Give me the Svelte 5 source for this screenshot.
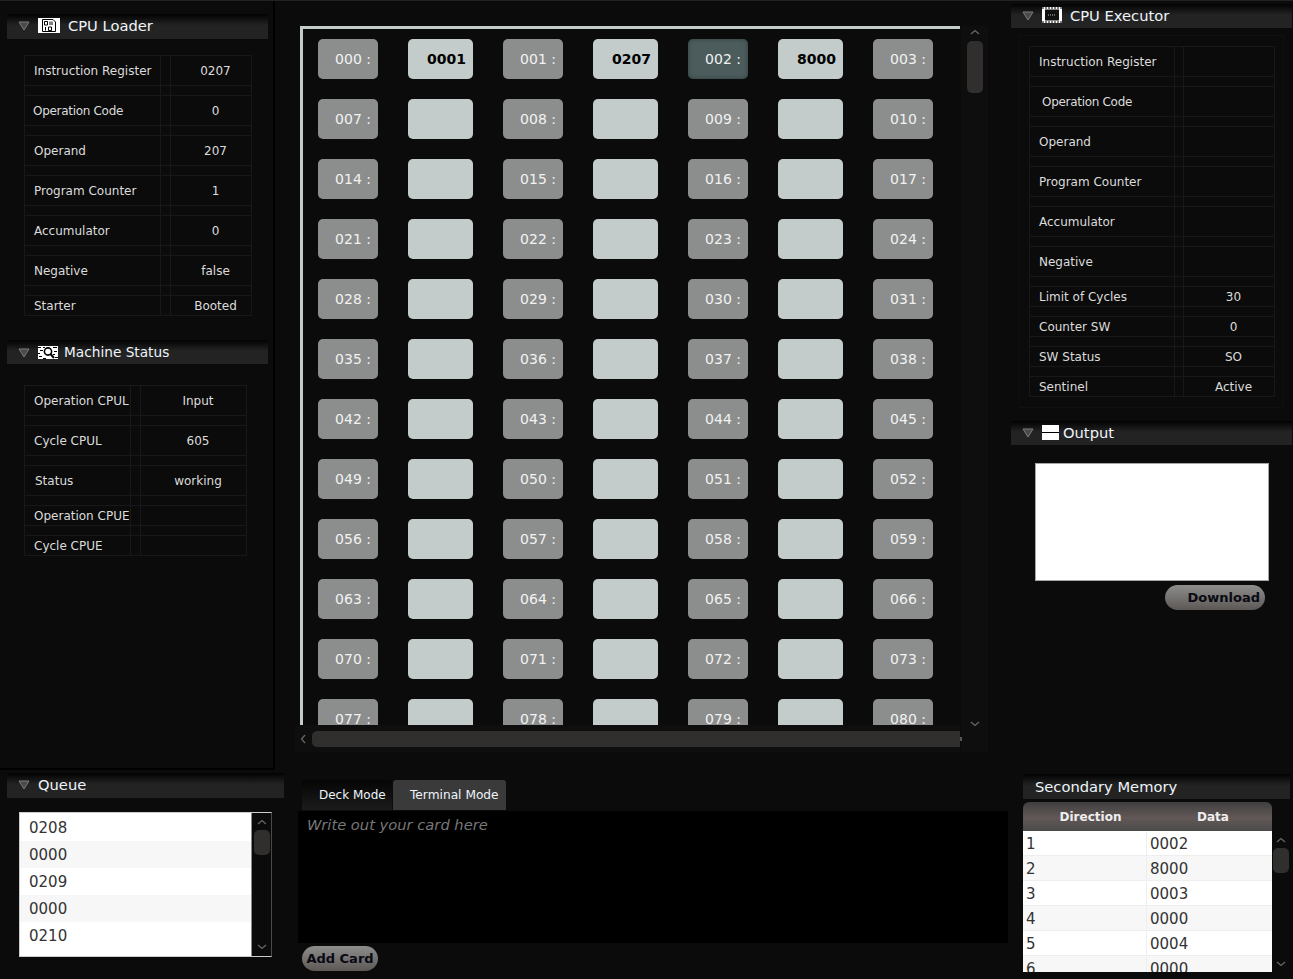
<script>
	const loaderRows = [
		{ label: 'Instruction Register', value: '0207' },
		{ label: 'Operation Code', value: '0', nudge: true },
		{ label: 'Operand', value: '207' },
		{ label: 'Program Counter', value: '1' },
		{ label: 'Accumulator', value: '0' },
		{ label: 'Negative', value: 'false' },
		{ label: 'Starter', value: 'Booted', short: true }
	];
	const statusRows = [
		{ label: 'Operation CPUL', value: 'Input' },
		{ label: 'Cycle CPUL', value: '605' },
		{ label: 'Status', value: 'working', indent: true },
		{ label: 'Operation CPUE', value: '', short: true },
		{ label: 'Cycle CPUE', value: '', short: true }
	];
	const executorRows = [
		{ label: 'Instruction Register', value: '' },
		{ label: 'Operation Code', value: '', wide: true },
		{ label: 'Operand', value: '' },
		{ label: 'Program Counter', value: '' },
		{ label: 'Accumulator', value: '' },
		{ label: 'Negative', value: '' },
		{ label: 'Limit of Cycles', value: '30', short: true },
		{ label: 'Counter SW', value: '0', short: true },
		{ label: 'SW Status', value: 'SO', short: true },
		{ label: 'Sentinel', value: 'Active', short: true }
	];

	const values = { 0: '0001', 1: '0207', 2: '8000' };
	const deckRows = Array.from({ length: 12 }, (_, r) =>
		[0, 1, 2, 3].map((c) => ({ addr: 7 * r + c, value: r === 0 ? values[c] : '' }))
	);
	const pad = (n) => String(n).padStart(3, '0');

	const queue = ['0208', '0000', '0209', '0000', '0210'];
	const memory = [
		[1, '0002'],
		[2, '8000'],
		[3, '0003'],
		[4, '0000'],
		[5, '0004'],
		[6, '0000']
	];
</script>

{#snippet arrow()}
	<svg class="arrow" width="12" height="10" viewBox="0 0 12 10">
		<polygon points="1,1 11,1 6,9" fill="#4a4a4a" stroke="#7c7c7c" />
	</svg>
{/snippet}

{#snippet chevron(dir)}
	<svg class="chev" width="10" height="6" viewBox="0 0 10 6">
		{#if dir === 'up'}
			<path d="M1 5 L5 1.5 L9 5" fill="none" stroke="#666" stroke-width="1.3" />
		{:else}
			<path d="M1 1 L5 4.5 L9 1" fill="none" stroke="#666" stroke-width="1.3" />
		{/if}
	</svg>
{/snippet}

{#snippet grid(rows, kind)}
	<div class="tbl {kind}">
		{#each rows as row, i}
			{#if i > 0}
				<div class="tr gap"><span></span><span></span><span></span></div>
			{/if}
			<div class="tr" class:short={row.short}>
				<span class="lbl" class:nudge={row.nudge} class:indent={row.indent} class:wide={row.wide}>{row.label}</span>
				<span></span>
				<span class="val">{row.value}</span>
			</div>
		{/each}
	</div>
{/snippet}

<div class="page">
	<div class="top">
		<section class="left">
			<header class="title">
				{@render arrow()}
				<svg class="icon" width="22" height="15" viewBox="0 0 22 15">
					<rect width="22" height="15" fill="#fff" />
					<path d="M4.5 1.5 H15 L17.5 4 V13.5 H4.5 Z" fill="none" stroke="#000" />
					<path d="M6.5 3.5 h3 v3.5 h-3 z M12 3.5 v3.5 M14 3.5 v3.5 M7.5 9 v3.5 M10.5 9 h3 v3.5 h-3 z" fill="none" stroke="#000" />
				</svg>
				<span>CPU Loader</span>
			</header>
			{@render grid(loaderRows, 'loader')}

			<header class="title second">
				{@render arrow()}
				<svg class="icon" width="20" height="13" viewBox="0 0 20 13">
					<rect width="20" height="13" fill="#fff" />
					<path d="M0 1.5 h3 M5 1.5 h2 M2 4.5 h3 M0 7.5 h2 M1 10.5 h3 M5 12.5 h3 M15 1.5 h4 M16 5.5 h3 M15 8.5 h2 M17 11.5 h3" stroke="#000" />
					<circle cx="10" cy="5.5" r="3.6" fill="none" stroke="#000" stroke-width="1.6" />
					<path d="M12.5 8 L16 12" stroke="#000" stroke-width="2" />
				</svg>
				<span class="tight status-title">Machine Status</span>
			</header>
			{@render grid(statusRows, 'status')}
		</section>

		<section class="center">
			<div class="deck">
				<div class="viewport">
					<div class="cards">
						{#each deckRows as row}
							{#each row as cell, c}
								<div class="addr" class:active={cell.addr === 2}>{pad(cell.addr)} :</div>
								{#if c < 3}
									<div class="word">{cell.value}</div>
								{/if}
							{/each}
						{/each}
					</div>
				</div>
				<div class="vbar">
					{@render chevron('up')}
					<div class="vthumb"></div>
					<div class="fill"></div>
					{@render chevron('down')}
				</div>
				<div class="hbar">
					<svg width="6" height="10" viewBox="0 0 6 10">
						<path d="M5 1 L1.5 5 L5 9" fill="none" stroke="#666" stroke-width="1.3" />
					</svg>
					<div class="hthumb"></div>
					<span class="nub"></span>
				</div>
			</div>
		</section>

		<section class="right">
			<header class="title exec">
				{@render arrow()}
				<svg class="icon" width="20" height="16" viewBox="0 0 20 16">
					<rect width="20" height="16" fill="#fff" />
					<rect x="3" y="2.5" width="14" height="11" fill="#111" />
					<path d="M1 0 v2 M4 0 v2 M7 0 v2 M10 0 v2 M13 0 v2 M16 0 v2 M19 0 v2 M1 14 v2 M4 14 v2 M7 14 v2 M10 14 v2 M13 14 v2 M16 14 v2 M19 14 v2" stroke="#000" />
					<path d="M6 8 h8" stroke="#bbb" stroke-dasharray="1 1" />
				</svg>
				<span>CPU Executor</span>
			</header>
			<div class="exec-box">
				{@render grid(executorRows, 'executor')}
			</div>

			<header class="title output">
				{@render arrow()}
				<svg class="icon" width="17" height="15" viewBox="0 0 17 15">
					<rect width="17" height="15" fill="#fff" />
					<path d="M0 7.5 H17" stroke="#000" />
				</svg>
				<span class="tighter">Output</span>
			</header>
			<div class="paper"></div>
			<div class="download-row"><button class="pill download">Download</button></div>
		</section>
	</div>

	<div class="bottom">
		<section class="queue">
			<header class="title">
				{@render arrow()}
				<span class="plain">Queue</span>
			</header>
			<div class="queue-box">
				<div class="queue-list">
					{#each queue as item}
						<div class="queue-row">{item}</div>
					{/each}
				</div>
				<div class="queue-bar">
					{@render chevron('up')}
					<div class="small-thumb"></div>
					<div class="fill"></div>
					{@render chevron('down')}
				</div>
			</div>
		</section>

		<section class="editor">
			<div class="tabs">
				<div class="tab selected">Deck Mode</div>
				<div class="tab">Terminal Mode</div>
			</div>
			<div class="textarea">Write out your card here</div>
			<button class="pill add">Add Card</button>
		</section>

		<section class="memory">
			<header class="title mem-title">Secondary Memory</header>
			<div class="mem-body">
				<div class="mem-table">
					<div class="mem-head"><span>Direction</span><span>Data</span></div>
					<div class="mem-rows">
						{#each memory as [dir, data]}
							<div class="mem-row"><span>{dir}</span><span>{data}</span></div>
						{/each}
					</div>
				</div>
				<div class="mem-bar">
					{@render chevron('up')}
					<div class="small-thumb"></div>
					<div class="fill"></div>
					{@render chevron('down')}
				</div>
			</div>
		</section>
	</div>
</div>

<style>
	:global(body) {
		background: #0b0b0b;
		font-family: 'DejaVu Sans', sans-serif;
	}

	.page {
		width: 1293px;
		height: 979px;
		overflow: hidden;
		display: grid;
		grid-template-rows: 770px 209px;
		color: #e6e6e6;
	}

	.top {
		display: grid;
		grid-template-columns: 275px 735px 283px;
		border-top: 1px solid #222;
		min-height: 0;
	}

	.bottom {
		display: grid;
		grid-template-columns: 295px 715px 283px;
		min-height: 0;
	}

	.left {
		border-right: 2px solid #000;
		border-bottom: 2px solid #000;
		padding-top: 13px;
	}

	.title {
		display: flex;
		align-items: center;
		height: 25px;
		box-sizing: border-box;
		padding-bottom: 2px;
		margin-left: 7px;
		width: 261px;
		font-size: 14.7px;
		color: #eef4fa;
		background: linear-gradient(#020202, #232323 45%, #232323);
	}

	.arrow {
		margin-left: 11px;
		margin-top: 1px;
		flex: none;
	}

	.icon {
		margin-left: 8px;
		margin-right: 8px;
		flex: none;
	}

	.tight {
		margin-left: -2px;
	}

	.tighter {
		margin-left: -4px;
	}

	.status-title {
		font-size: 13.7px;
	}

	.plain {
		margin-left: 8px;
	}

	.second {
		margin-top: 24px;
		height: 24px;
		padding-bottom: 0;
	}

	.tbl {
		display: flex;
		flex-direction: column;
		font-size: 12px;
		color: #dcdcdc;
		border-left: 1px solid #181818;
		border-right: 1px solid #181818;
	}

	.tr {
		display: grid;
		height: 31px;
		box-sizing: border-box;
		border-top: 1px solid #181818;
		border-bottom: 1px solid #181818;
		align-items: stretch;
	}

	.tr.short {
		height: 21px;
	}

	.tr.gap {
		height: 9px;
		border: 0;
	}

	.tr > span {
		display: flex;
		align-items: center;
		white-space: nowrap;
	}

	.tr > span:nth-child(2) {
		border-left: 1px solid #181818;
		border-right: 1px solid #181818;
	}

	.lbl {
		padding-left: 9px;
	}

	.lbl.nudge {
		padding-left: 8px;
		letter-spacing: -0.3px;
	}

	.lbl.indent {
		padding-left: 10px;
	}

	.lbl.wide {
		padding-left: 12px;
		letter-spacing: -0.3px;
	}

	.val {
		justify-content: center;
		padding-left: 9px;
	}

	.loader {
		margin: 16px 0 0 24px;
		width: 226px;
	}

	.loader .tr {
		grid-template-columns: 135px 11px 1fr;
	}

	.status {
		margin: 21px 0 0 24px;
		width: 221px;
	}

	.status .tr {
		grid-template-columns: 105px 11px 1fr;
	}

	.executor .tr {
		grid-template-columns: 144px 10px 1fr;
	}

	.center {
		padding: 25px 0 0 20px;
	}

	.deck {
		display: grid;
		grid-template-columns: 665px 28px;
		grid-template-rows: 699px 27px;
	}

	.viewport {
		grid-column: 1;
		grid-row: 1;
		margin-left: 5px;
		overflow: hidden;
		border-left: 3px solid #c3cccb;
		border-top: 3px solid #c3cccb;
		background: #0b0b0b;
	}

	.cards {
		display: grid;
		grid-template-columns: 60px 65px 60px 65px 60px 65px 60px;
		grid-auto-rows: 40px;
		column-gap: 30px;
		row-gap: 20px;
		padding: 10px 0 0 15px;
	}

	.addr,
	.word {
		display: flex;
		align-items: center;
		justify-content: flex-end;
		padding-right: 7px;
		border-radius: 5px;
		font-size: 14px;
	}

	.addr {
		background: #8c8e8d;
		color: #f2f2f2;
	}

	.addr.active {
		background: #4c5c5c;
		box-shadow: inset 0 0 4px #2e3a3a;
	}

	.word {
		background: #c3cccb;
		color: #000;
		font-weight: bold;
	}

	.vbar {
		grid-column: 2;
		grid-row: 1 / span 2;
		display: flex;
		flex-direction: column;
		align-items: center;
		background: #0e0e0e;
		padding: 3px 0 25px;
		margin-left: 1px;
		box-sizing: border-box;
	}

	.vthumb {
		width: 16px;
		height: 52px;
		margin-top: 6px;
		border-radius: 5px;
		background: #302f2e;
	}

	.fill {
		flex: 1;
	}

	.hbar {
		grid-column: 1;
		grid-row: 2;
		display: flex;
		align-items: center;
		background: #0e0e0e;
		padding-left: 5px;
		gap: 6px;
	}

	.hthumb {
		flex: 1;
		height: 16px;
		border-radius: 5px 0 0 5px;
		background: #302f2e;
	}

	.nub {
		flex: none;
		width: 2px;
		height: 4px;
		margin: 0 -2px 0 -6px;
		background: #555;
	}

	.right {
		padding-top: 3px;
	}

	.exec {
		margin-left: 1px;
		width: 281px;
		height: 24px;
	}

	.output {
		margin: 13px 0 0 1px;
		width: 281px;
		height: 24px;
	}

	.exec-box {
		margin: 7px 0 0 9px;
		width: 265px;
		padding: 10px 0;
		box-sizing: border-box;
		border: 1px solid #101010;
	}

	.executor {
		margin-left: 9px;
		width: 244px;
	}

	.paper {
		margin: 18px 0 0 25px;
		width: 234px;
		height: 118px;
		box-sizing: border-box;
		background: #fff;
		border: 1px solid #a5a5a5;
	}

	.download-row {
		margin: 4px 0 0 155px;
	}

	.pill {
		display: block;
		height: 25px;
		padding: 0;
		border: 0;
		border-radius: 13px;
		font-family: inherit;
		font-size: 13px;
		font-weight: bold;
		color: #0a0a14;
		background: linear-gradient(#8e8e8c, #5c5856);
	}

	.download {
		width: 100px;
		text-align: right;
		padding-right: 5px;
	}

	.add {
		width: 76px;
		margin: 3px 0 0 7px;
	}

	.queue {
		padding-top: 3px;
	}

	.queue .title {
		width: 277px;
	}

	.queue-box {
		display: grid;
		grid-template-columns: 232px 19px;
		margin: 14px 0 0 19px;
		height: 145px;
		width: 253px;
		box-sizing: border-box;
		border: 1px solid #ccc;
		border-right-color: #4a4a4a;
		overflow: hidden;
	}

	.queue-list {
		background: #fff;
		padding-top: 1px;
		border-right: 1px solid #8a8a8a;
	}

	.queue-row {
		height: 27px;
		padding-left: 9px;
		display: flex;
		align-items: center;
		font-size: 15px;
		color: #333;
	}

	.queue-row:nth-child(even) {
		background: #f7f7f7;
	}

	.queue-bar,
	.mem-bar {
		display: flex;
		flex-direction: column;
		align-items: center;
		padding: 6px 0;
		background: #0b0b0b;
	}

	.small-thumb {
		width: 16px;
		height: 25px;
		margin-top: 5px;
		border-radius: 5px;
		background: #302f2e;
	}

	.tabs {
		display: flex;
		margin: 10px 0 0 7px;
		height: 30px;
	}

	.tab {
		display: flex;
		align-items: center;
		padding: 0 0 1px 17px;
		box-sizing: border-box;
		width: 113px;
		font-size: 12.2px;
		white-space: nowrap;
		color: #eef4fa;
		background: #3a3a3a;
		border-radius: 3px 3px 0 0;
	}

	.tab.selected {
		background: linear-gradient(#050505, #1c1c1c);
		width: 90px;
		font-size: 12px;
		margin-right: 1px;
		padding: 0 0 1px 17px;
	}

	.textarea {
		margin: 1px 0 0 3px;
		width: 710px;
		height: 132px;
		box-sizing: border-box;
		padding: 5px 9px;
		background: #000;
		color: #777;
		font-size: 14.7px;
		font-style: italic;
	}

	.memory {
		padding-top: 4px;
	}

	.mem-title {
		margin-left: 13px;
		width: 267px;
		padding: 0 0 0 12px;
	}

	.mem-body {
		display: grid;
		grid-template-columns: 249px 18px;
		margin: 3px 0 0 13px;
	}

	.mem-head {
		display: grid;
		grid-template-columns: 123px 1fr;
		height: 29px;
		align-items: center;
		text-align: center;
		font-size: 12px;
		font-weight: bold;
		color: #eee;
		border-radius: 6px 6px 0 0;
		background: linear-gradient(#3f3f3f, #625857 55%, #4a4a4a);
	}

	.mem-head span:first-child {
		padding-left: 12px;
	}

	.mem-head span:last-child {
		padding-left: 8px;
	}

	.mem-rows {
		height: 141px;
		overflow: hidden;
		background: #fff;
	}

	.mem-row {
		display: grid;
		grid-template-columns: 123px 1fr;
		height: 25px;
		box-sizing: border-box;
		padding-top: 1px;
		border-bottom: 1px solid #eee;
		align-items: center;
		font-size: 15px;
		color: #333;
	}

	.mem-row:nth-child(even) {
		background: #f7f7f7;
	}

	.mem-row span {
		padding-left: 3px;
	}

	.mem-row span:nth-child(2) {
		border-left: 1px solid #eee;
		height: 100%;
		display: flex;
		align-items: center;
	}

	.mem-bar {
		padding: 35px 0 5px;
		margin-top: 0;
	}

	.chev {
		flex: none;
	}
</style>
